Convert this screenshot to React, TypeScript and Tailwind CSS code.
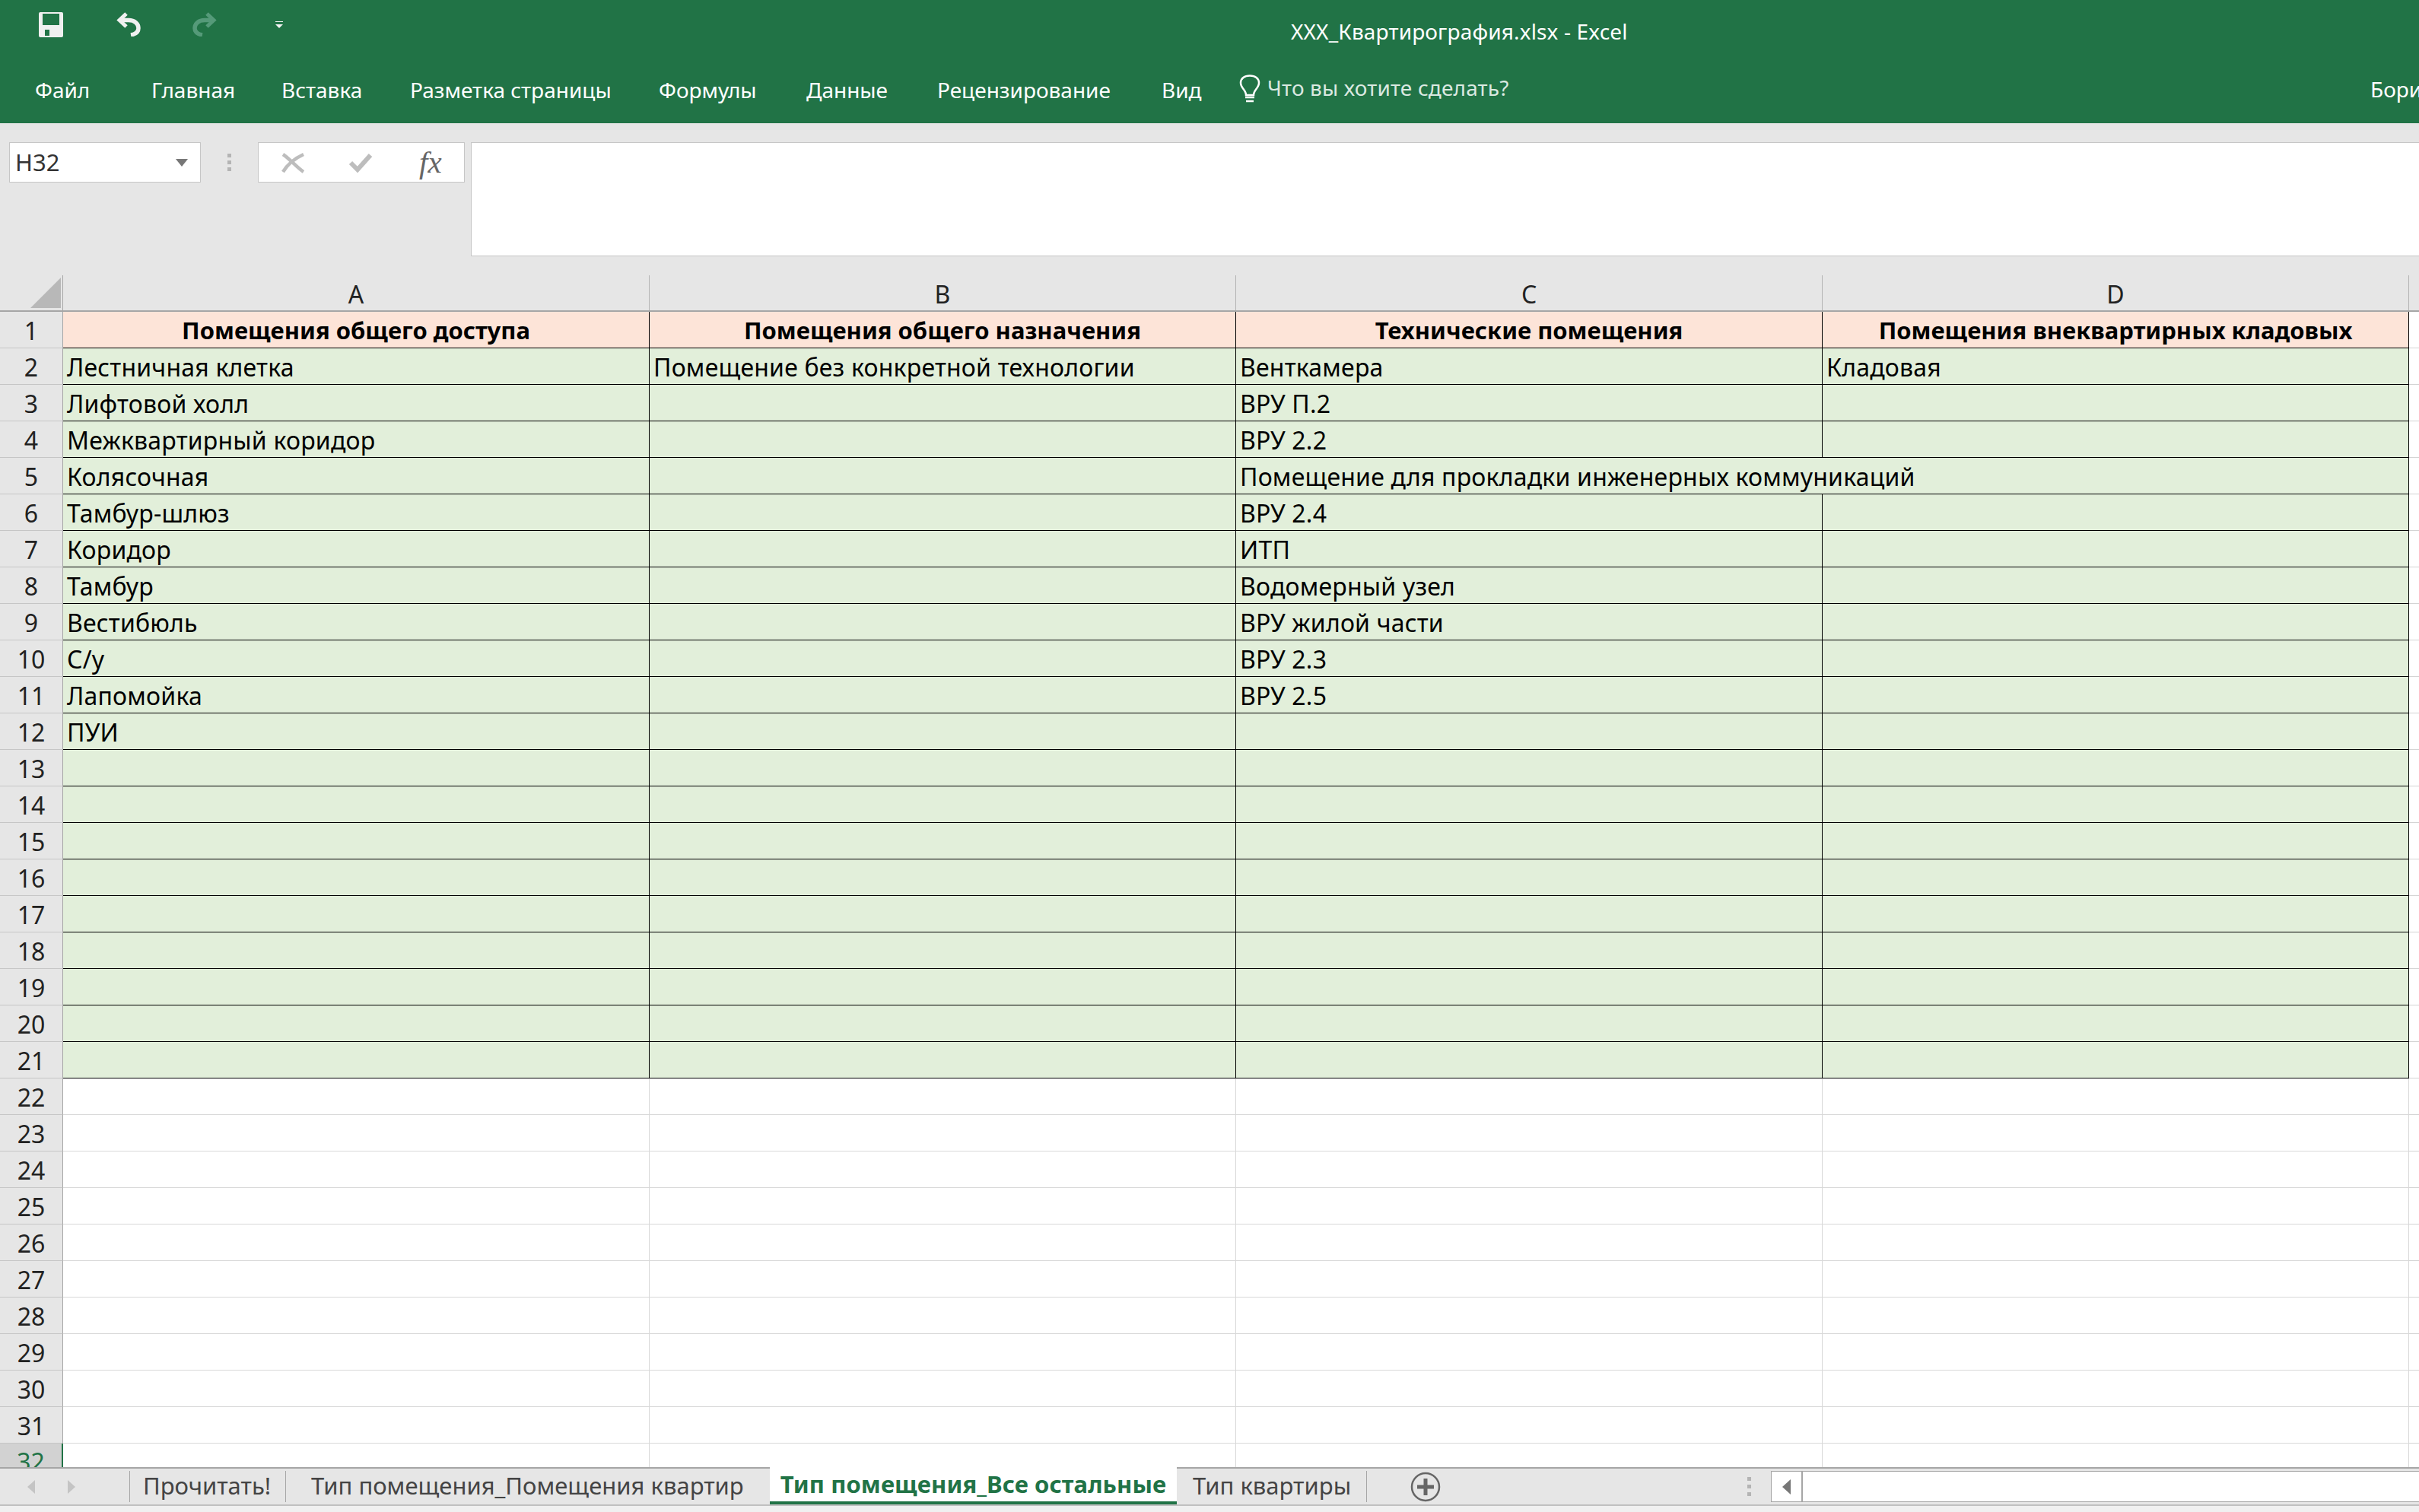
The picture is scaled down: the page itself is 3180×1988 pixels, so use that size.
const ribbonTabs: [string, string][] = [
  ["Файл", "w-[153px]"],
  ["Главная", "w-[171px]"],
  ["Вставка", "w-[169px]"],
  ["Разметка страницы", "w-[327px]"],
  ["Формулы", "w-[194px]"],
  ["Данные", "w-[172px]"],
  ["Рецензирование", "w-[295px]"],
  ["Вид", "w-[102px]"],
];

const rowData: [string, string, string, string][] = [
  ["Лестничная клетка", "Помещение без конкретной технологии", "Венткамера", "Кладовая"],
  ["Лифтовой холл", "", "ВРУ П.2", ""],
  ["Межквартирный коридор", "", "ВРУ 2.2", ""],
  ["Колясочная", "", "Помещение для прокладки инженерных коммуникаций", ""],
  ["Тамбур-шлюз", "", "ВРУ 2.4", ""],
  ["Коридор", "", "ИТП", ""],
  ["Тамбур", "", "Водомерный узел", ""],
  ["Вестибюль", "", "ВРУ жилой части", ""],
  ["С/у", "", "ВРУ 2.3", ""],
  ["Лапомойка", "", "ВРУ 2.5", ""],
  ["ПУИ", "", "", ""],
  ...Array.from({ length: 9 }, () => ["", "", "", ""] as [string, string, string, string]),
];

const widths = ["w-[771px]", "w-[771px]", "w-[771px]", "w-[771px]"];
const letters = ["A", "B", "C", "D"];
const headers = [
  "Помещения общего доступа",
  "Помещения общего назначения",
  "Технические помещения",
  "Помещения внеквартирных кладовых",
];

function Undo({ color, flip }: { color: string; flip?: boolean }) {
  return (
    <svg width="32" height="32" viewBox="0 0 32 32" fill="none" stroke={color} className={flip ? "-scale-x-100" : ""}>
      <path d="M13 2 L4 10.6 L13 19" strokeWidth="5" />
      <path d="M5 10.6 H16 C24 10.6 29 15 29 21 C29 26 25 29 19 30" strokeWidth="5.5" />
    </svg>
  );
}

function RowHead({ n, active }: { n: number; active?: boolean }) {
  return (
    <div
      className={
        active
          ? "w-[83px] shrink-0 h-full flex items-center justify-center bg-[#d2d2d2] border-r-2 border-[#217346] text-[#217346]"
          : "w-[83px] shrink-0 h-full flex items-center justify-center bg-[#e6e6e6] border-r border-b border-r-[#a6a6a6] border-b-[#c6c6c6] text-[#222222] pt-[2px]"
      }
    >
      {n}
    </div>
  );
}

export default function App() {
  return (
    <div className="w-[3180px] h-[1988px] flex flex-col overflow-hidden bg-[#e6e6e6] font-['Noto_Sans',sans-serif] text-[32px] text-black">
      {/* Ribbon */}
      <div className="h-[162px] shrink-0 bg-[#217346] text-white flex flex-col">
        <div className="h-[82px] flex items-start pl-[51px]">
          <svg width="32" height="33" viewBox="0 0 32 33" className="mt-[16px]">
            <path fillRule="evenodd" fill="#f0f0f0" d="M2 0 H30 Q32 0 32 2 V31 Q32 33 30 33 H2 Q0 33 0 31 V2 Q0 0 2 0 Z M5 2 V17 H27 V2 Z M8 23 V31 H22 V23 Z" />
            <rect x="14" y="23" width="8" height="8" fill="#f0f0f0" />
          </svg>
          <div className="ml-[70px] mt-[16px]">
            <Undo color="#f0f0f0" />
          </div>
          <div className="ml-[68px] mt-[16px]">
            <Undo color="#559a79" flip />
          </div>
          <svg width="10" height="10" viewBox="0 0 10 10" className="ml-[77px] mt-[28px]" fill="#f4f4f4">
            <rect x="0" y="0" width="10" height="1" />
            <path d="M0 4 H10 L5 9 Z" />
          </svg>
          <div className="ml-[1325px] mt-[21px] text-[28px] tracking-[0.15px] leading-[40px] whitespace-nowrap">XXX_Квартирография.xlsx - Excel</div>
        </div>
        <div className="flex items-center h-[72px] text-[28px] whitespace-nowrap">
          {ribbonTabs.map(([t, w]) => (
            <div key={t} className={w + " shrink-0 first:pl-[46px] first:w-[199px]"}>
              {t}
            </div>
          ))}
          <svg width="28" height="37" viewBox="0 0 28 37" fill="none" stroke="#ffffff" strokeWidth="2.5" className="shrink-0 -mt-[4px]">
            <path d="M9 27 C9 20 2 18 2 11 C2 5 7 1.5 14 1.5 C21 1.5 26 5 26 11 C26 18 19 20 19 27 Z" />
            <path d="M8 30 H20 M9 35 H19" />
          </svg>
          <div className="ml-[9px] -mt-[6px] text-[#dbe9e1] tracking-[0.15px]">Что вы хотите сделать?</div>
          <div className="ml-auto mr-[-30px] w-[94px] overflow-hidden -mt-[2px]">Борис</div>
        </div>
      </div>

      {/* Formula bar */}
      <div className="h-[200px] shrink-0 flex items-start pt-[25px] pl-[12px]">
        <div className="w-[252px] h-[53px] bg-white border border-[#c6c6c6] flex items-center justify-between pl-[7px] pr-[16px] text-[#333333] text-[31px]">
          <span>H32</span>
          <svg width="16" height="10" viewBox="0 0 16 10" fill="#777777">
            <path d="M0 0 H16 L8 10 Z" />
          </svg>
        </div>
        <div className="w-[75px] h-[53px] flex flex-col items-center justify-center gap-[4px]">
          <div className="w-[5px] h-[5px] bg-[#b4b4b4]" />
          <div className="w-[5px] h-[5px] bg-[#b4b4b4]" />
          <div className="w-[5px] h-[5px] bg-[#b4b4b4]" />
        </div>
        <div className="w-[272px] h-[53px] bg-white border border-[#c6c6c6] flex items-center pl-[30px]">
          <svg width="30" height="28" viewBox="0 0 30 28" fill="none" stroke="#bdbdbd" strokeWidth="4.5">
            <path d="M2 3 C10 8 20 20 29 26" />
            <path d="M29 3 C18 8 8 16 2 26" />
          </svg>
          <svg width="32" height="26" viewBox="0 0 32 26" fill="none" stroke="#bdbdbd" strokeWidth="6" className="ml-[58px]">
            <path d="M3 13 L12 22 L29 3" />
          </svg>
          <span className="ml-[61px] font-['Liberation_Serif',serif] italic text-[41px] leading-none text-[#666666]">fx</span>
        </div>
        <div className="ml-[8px] flex-1 h-[150px] bg-white border-l border-b border-t border-[#c6c6c6]" />
      </div>

      {/* Sheet */}
      <div className="flex-1 min-h-0 overflow-hidden bg-white">
        <div className="h-[48px] flex bg-[#e6e6e6] border-b-2 border-[#a6a6a6]">
          <div className="w-[83px] shrink-0 h-full border-r border-[#a6a6a6] flex items-end justify-end pr-[2px] pb-[3px]">
            <svg width="40" height="40" viewBox="0 0 40 40" fill="#b8b8b8">
              <path d="M40 0 V40 H0 Z" />
            </svg>
          </div>
          {letters.map((l, i) => (
            <div key={l} className={widths[i] + " shrink-0 h-full border-r border-[#b4b4b4] flex items-center justify-center text-[#222222] pt-[3px]"}>
              {l}
            </div>
          ))}
        </div>

        <div className="h-[48px] flex">
          <RowHead n={1} />
          {headers.map((h, i) => (
            <div key={h} className={widths[i] + " shrink-0 h-full bg-[#fde4d8] border-r border-b border-black flex items-center justify-center font-bold text-[31px] pt-[1px]"}>
              {h}
            </div>
          ))}
          <div className="flex-1 border-b border-[#d4d4d4]" />
        </div>

        {rowData.map((r, ri) => (
          <div key={ri} className="h-[48px] flex">
            <RowHead n={ri + 2} />
            {r.map((c, ci) => (
              <div
                key={ci}
                className={
                  widths[ci] +
                  " shrink-0 h-full bg-[#e2efda] border-b border-black flex items-center pl-[5px] pt-[2px] tracking-[0.2px] whitespace-nowrap " +
                  (ri === 3 && ci === 2 ? "border-r-0 relative z-10" : "border-r")
                }
              >
                {c}
              </div>
            ))}
            <div className="flex-1 border-b border-[#d4d4d4]" />
          </div>
        ))}

        {Array.from({ length: 11 }, (_, i) => i + 22).map((n) => (
          <div key={n} className="h-[48px] flex">
            <RowHead n={n} active={n === 32} />
            {widths.map((w, ci) => (
              <div key={ci} className={w + " shrink-0 h-full border-r border-b border-[#d8d8d8]"} />
            ))}
            <div className="flex-1 border-b border-[#d4d4d4]" />
          </div>
        ))}
      </div>

      {/* Sheet tabs */}
      <div className="h-[51px] shrink-0 bg-[#e6e6e6] border-t-2 border-b-2 border-t-[#a6a6a6] border-b-[#c0c0c0] flex items-stretch text-[#444444] text-[31px] whitespace-nowrap">
        <div className="w-[170px] shrink-0 flex items-center pl-[36px] gap-[43px]">
          <svg width="10" height="18" viewBox="0 0 10 18" fill="#c4c4c4"><path d="M10 0 V18 L0 9 Z" /></svg>
          <svg width="10" height="18" viewBox="0 0 10 18" fill="#c4c4c4"><path d="M0 0 V18 L10 9 Z" /></svg>
        </div>
        <div className="w-[206px] shrink-0 flex items-center my-[3px] border-l border-r border-[#a6a6a6] pl-[17px] pb-[2px]">Прочитать!</div>
        <div className="w-[636px] shrink-0 flex items-center pl-[33px] pb-[2px]">Тип помещения_Помещения квартир</div>
        <div className="w-[535px] shrink-0 bg-white flex items-center justify-center border-b-4 border-[#217346] -mt-[2px] text-[#217346] font-bold tracking-[0.1px]">
          Тип помещения_Все остальные
        </div>
        <div className="w-[250px] shrink-0 flex items-center pl-[21px] my-[3px] border-r border-[#a6a6a6] pb-[2px]">Тип квартиры</div>
        <div className="ml-[57px] flex items-center">
          <svg width="40" height="40" viewBox="0 0 40 40" fill="none" stroke="#666666">
            <circle cx="20" cy="20" r="18" strokeWidth="2.5" />
            <path d="M9 20 H31 M20 9 V31" strokeWidth="5" />
          </svg>
        </div>
        <div className="ml-[391px] w-[29px] flex flex-col items-center justify-center gap-[5px]">
          <div className="w-[5px] h-[5px] bg-[#b4b4b4]" />
          <div className="w-[5px] h-[5px] bg-[#b4b4b4]" />
          <div className="w-[5px] h-[5px] bg-[#b4b4b4]" />
        </div>
        <div className="ml-[14px] flex-1 flex my-[3px]">
          <div className="w-[41px] h-full bg-white border border-[#a6a6a6] flex items-center justify-center">
            <svg width="11" height="20" viewBox="0 0 11 20" fill="#777777"><path d="M11 0 V20 L0 10 Z" /></svg>
          </div>
          <div className="flex-1 h-full bg-white border-y border-l border-[#a6a6a6]" />
        </div>
      </div>
      <div className="h-[8px] shrink-0 bg-[#f0f0f0]" />
    </div>
  );
}
